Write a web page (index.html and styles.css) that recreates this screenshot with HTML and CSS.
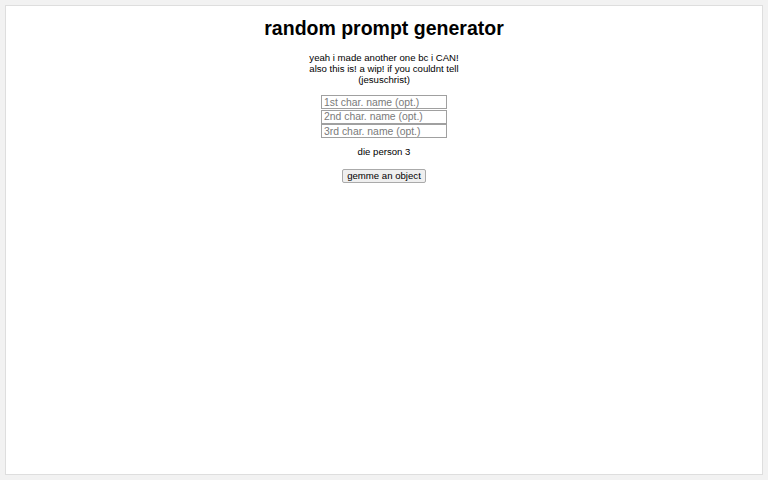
FILE: index.html
```html
<!DOCTYPE html>
<html>
<head>
<meta charset="utf-8">
<link rel="stylesheet" href="styles.css">
</head>
<body>
<div class="page">
  <h1 class="title">random prompt generator</h1>
  <p class="intro">yeah i made another one bc i CAN!<br>also this is! a wip! if you couldnt tell<br>(jesuschrist)</p>
  <div class="fields">
    <input class="field" type="text" placeholder="1st char. name (opt.)">
    <input class="field" type="text" placeholder="2nd char. name (opt.)">
    <input class="field" type="text" placeholder="3rd char. name (opt.)">
  </div>
  <p class="result">die person 3</p>
  <button class="btn">gemme an object</button>
</div>
</body>
</html>
```
FILE: styles.css
```css
html, body {
  margin: 0;
  padding: 0;
  height: 100%;
  background: #f2f2f2;
  font-family: "Liberation Sans", Arial, sans-serif;
}
body {
  padding: 5px;
  box-sizing: border-box;
}
.page {
  height: 470px;
  box-sizing: border-box;
  background: #fff;
  border: 1px solid #dedede;
  display: flex;
  flex-direction: column;
  align-items: center;
  color: #000;
}
.title {
  font-size: 19.5px;
  font-weight: bold;
  margin: 11px 0 0;
  line-height: 23px;
}
.intro {
  font-size: 9.6px;
  line-height: 11px;
  text-align: center;
  margin: 12px 0 0;
}
.fields {
  display: flex;
  flex-direction: column;
  margin-top: 10px;
}
.field {
  width: 126px;
  height: 14px;
  box-sizing: border-box;
  border: 1px solid #a0a0a0;
  padding: 0 2px;
  margin: 0 0 0.5px;
  font-family: "Liberation Sans", Arial, sans-serif;
  font-size: 10.4px;
}
.field::placeholder {
  color: #7a7a7a;
}
.result {
  font-size: 9.6px;
  line-height: 11px;
  margin: 7px 0 0;
}
.btn {
  margin-top: 12px;
  font-family: "Liberation Sans", Arial, sans-serif;
  font-size: 9.6px;
  padding: 0 4px;
  height: 14px;
  line-height: 10px;
  background: #efefef;
  border: 1px solid #aaa;
  border-radius: 2px;
}
```
